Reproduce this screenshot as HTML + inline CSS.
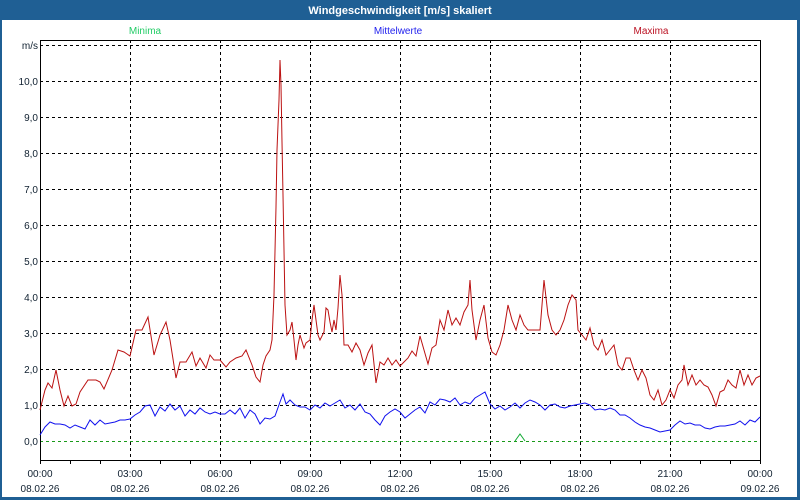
<!DOCTYPE html>
<html><head><meta charset="utf-8"><style>
html,body{margin:0;padding:0;background:#fff;}
body{width:800px;height:500px;overflow:hidden;position:relative;font-family:"Liberation Sans","DejaVu Sans",sans-serif;}
</style></head><body>
<svg width="800" height="500" viewBox="0 0 800 500" xmlns="http://www.w3.org/2000/svg" style="position:absolute;left:0;top:0" font-family="Liberation Sans, DejaVu Sans, sans-serif">
<rect x="0" y="0" width="800" height="500" fill="#1f5f94"/>
<rect x="2" y="20" width="795" height="477" fill="#fff"/>
<text x="400" y="14" fill="#fff" font-size="11" font-weight="bold" text-anchor="middle">Windgeschwindigkeit [m/s] skaliert</text>
<text x="145" y="34" fill="#22cc66" font-size="10" text-anchor="middle">Minima</text>
<text x="398" y="34" fill="#2222ee" font-size="10" text-anchor="middle">Mittelwerte</text>
<text x="651" y="34" fill="#bb1122" font-size="10" text-anchor="middle">Maxima</text>
<g stroke="#000" stroke-width="1" stroke-dasharray="3,3" fill="none" shape-rendering="crispEdges">
<line x1="40" y1="45.5" x2="760" y2="45.5"/>
<line x1="40" y1="81.5" x2="760" y2="81.5"/>
<line x1="40" y1="117.5" x2="760" y2="117.5"/>
<line x1="40" y1="153.5" x2="760" y2="153.5"/>
<line x1="40" y1="189.5" x2="760" y2="189.5"/>
<line x1="40" y1="225.5" x2="760" y2="225.5"/>
<line x1="40" y1="261.5" x2="760" y2="261.5"/>
<line x1="40" y1="297.5" x2="760" y2="297.5"/>
<line x1="40" y1="333.5" x2="760" y2="333.5"/>
<line x1="40" y1="369.5" x2="760" y2="369.5"/>
<line x1="40" y1="405.5" x2="760" y2="405.5"/>
<line x1="130.5" y1="40" x2="130.5" y2="460"/>
<line x1="220.5" y1="40" x2="220.5" y2="460"/>
<line x1="310.5" y1="40" x2="310.5" y2="460"/>
<line x1="400.5" y1="40" x2="400.5" y2="460"/>
<line x1="490.5" y1="40" x2="490.5" y2="460"/>
<line x1="580.5" y1="40" x2="580.5" y2="460"/>
<line x1="670.5" y1="40" x2="670.5" y2="460"/>
</g>
<line x1="40" y1="441.5" x2="760" y2="441.5" stroke="#1a9a1a" stroke-dasharray="3,3" shape-rendering="crispEdges"/>
<g stroke="#000" stroke-width="1" shape-rendering="crispEdges" fill="none">
<rect x="40.5" y="40.5" width="720" height="420"/>
<line x1="70.5" y1="460" x2="70.5" y2="464"/><line x1="100.5" y1="460" x2="100.5" y2="464"/><line x1="130.5" y1="460" x2="130.5" y2="464"/>
<line x1="160.5" y1="460" x2="160.5" y2="464"/><line x1="190.5" y1="460" x2="190.5" y2="464"/><line x1="220.5" y1="460" x2="220.5" y2="464"/>
<line x1="250.5" y1="460" x2="250.5" y2="464"/><line x1="280.5" y1="460" x2="280.5" y2="464"/><line x1="310.5" y1="460" x2="310.5" y2="464"/>
<line x1="340.5" y1="460" x2="340.5" y2="464"/><line x1="370.5" y1="460" x2="370.5" y2="464"/><line x1="400.5" y1="460" x2="400.5" y2="464"/>
<line x1="430.5" y1="460" x2="430.5" y2="464"/><line x1="460.5" y1="460" x2="460.5" y2="464"/><line x1="490.5" y1="460" x2="490.5" y2="464"/>
<line x1="520.5" y1="460" x2="520.5" y2="464"/><line x1="550.5" y1="460" x2="550.5" y2="464"/><line x1="580.5" y1="460" x2="580.5" y2="464"/>
<line x1="610.5" y1="460" x2="610.5" y2="464"/><line x1="640.5" y1="460" x2="640.5" y2="464"/><line x1="670.5" y1="460" x2="670.5" y2="464"/>
<line x1="700.5" y1="460" x2="700.5" y2="464"/><line x1="730.5" y1="460" x2="730.5" y2="464"/><line x1="40.5" y1="460" x2="40.5" y2="464"/><line x1="760.5" y1="460" x2="760.5" y2="464"/>
</g>
<g font-size="10" fill="#102030" text-anchor="end">
<text x="38" y="49">m/s</text>
<text x="38" y="85">10,0</text><text x="38" y="121">9,0</text><text x="38" y="157">8,0</text>
<text x="38" y="193">7,0</text><text x="38" y="229">6,0</text><text x="38" y="265">5,0</text>
<text x="38" y="301">4,0</text><text x="38" y="337">3,0</text><text x="38" y="373">2,0</text>
<text x="38" y="409">1,0</text><text x="38" y="445">0,0</text>
</g>
<g font-size="10" fill="#102030" text-anchor="middle">
<text x="40" y="477">00:00</text><text x="40" y="492">08.02.26</text>
<text x="130" y="477">03:00</text><text x="130" y="492">08.02.26</text>
<text x="220" y="477">06:00</text><text x="220" y="492">08.02.26</text>
<text x="310" y="477">09:00</text><text x="310" y="492">08.02.26</text>
<text x="400" y="477">12:00</text><text x="400" y="492">08.02.26</text>
<text x="490" y="477">15:00</text><text x="490" y="492">08.02.26</text>
<text x="580" y="477">18:00</text><text x="580" y="492">08.02.26</text>
<text x="670" y="477">21:00</text><text x="670" y="492">08.02.26</text>
<text x="760" y="477">00:00</text><text x="760" y="492">09.02.26</text>
</g>
<polyline fill="none" stroke="#11aa33" stroke-width="1" points="515,441 520,434 525,441"/>
<polyline fill="none" stroke="#1111ee" stroke-width="1" points="40,435 45,427 50,422 55,424 60,424 65,425 70,428 75,425 80,427 85,429 90,420 95,425 100,420 105,424 110,423 115,422 120,420 125,420 130,419 135,415 140,412 145,406 150,405 155,416 160,407 165,411 170,404 175,410 180,406 185,416 190,410 195,414 200,408 205,412 210,414 215,412 220,414 225,414 230,410 235,414 240,408 245,418 250,410 255,414 260,424 265,418 270,419 275,416 280,402 283,394 286,404 290,400 295,405 300,407 305,407 310,410 315,405 320,408 325,403 330,406 335,403 340,400 345,408 350,405 355,410 360,404 365,412 370,414 375,420 380,425 385,416 390,412 395,409 400,412 405,418 410,414 415,410 420,407 425,413 430,402 435,405 440,399 445,400 450,402 455,398 460,405 465,402 470,404 475,398 480,395 485,392 490,404 495,409 500,406 505,410 510,407 515,403 520,408 525,403 530,400 535,402 540,405 545,410 550,405 555,404 560,407 565,408 570,406 575,405 580,404 585,403 590,405 595,410 600,409 605,410 610,408 615,410 620,415 625,415 630,418 635,422 640,425 645,427 650,428 655,430 660,432 665,431 670,430 675,425 680,421 685,424 690,423 695,425 700,425 705,428 710,429 715,427 720,426 725,426 730,425 735,424 740,421 745,425 750,420 755,422 760,417"/>
<polyline fill="none" stroke="#bb1111" stroke-width="1" points="40,410 45,390 48,383 52,388 56,370 60,390 64,406 68,396 72,406 76,404 80,392 88,380 96,380 100,382 104,389 112,370 118,350 124,352 130,356 136,330 142,330 148,317 154,355 160,335 166,322 170,340 176,378 180,362 186,362 192,352 196,366 200,358 206,368 210,355 214,360 220,360 226,367 230,362 236,358 242,356 246,350 252,365 256,377 260,382 263,365 266,356 270,350 272,340 274,295 276,207 277,150 279,100 280,60 281,85 282,142 283,195 284,250 285,305 287,335 290,330 292,322 294,340 296,360 298,345 300,335 304,348 306,343 310,340 312,320 314,305 318,335 320,340 324,332 326,308 328,310 330,322 332,332 334,320 336,330 338,308 340,275 342,295 344,345 348,345 352,352 356,343 360,350 364,365 368,353 372,345 376,383 380,362 384,365 388,358 392,365 396,360 400,366 404,362 408,358 412,351 416,356 420,336 424,350 428,364 432,348 436,345 440,320 444,330 448,310 452,325 456,318 460,325 464,312 468,305 470,280 472,310 476,340 480,320 484,305 488,338 492,352 496,355 500,345 504,330 508,305 512,320 516,330 520,315 524,325 528,330 532,330 536,330 540,330 544,280 548,315 552,330 556,335 560,330 564,320 568,305 572,295 576,300 578,330 582,335 586,340 590,328 594,345 598,350 602,340 606,355 610,350 614,345 618,365 622,370 626,358 630,358 634,370 638,380 642,370 646,378 650,395 654,400 658,390 662,405 666,400 670,390 674,398 678,385 682,380 684,365 688,385 692,375 696,385 700,380 704,385 708,387 712,395 716,406 720,392 724,390 728,380 732,385 736,388 740,370 744,385 748,375 752,385 756,378 760,376"/>
</svg>
</body></html>
